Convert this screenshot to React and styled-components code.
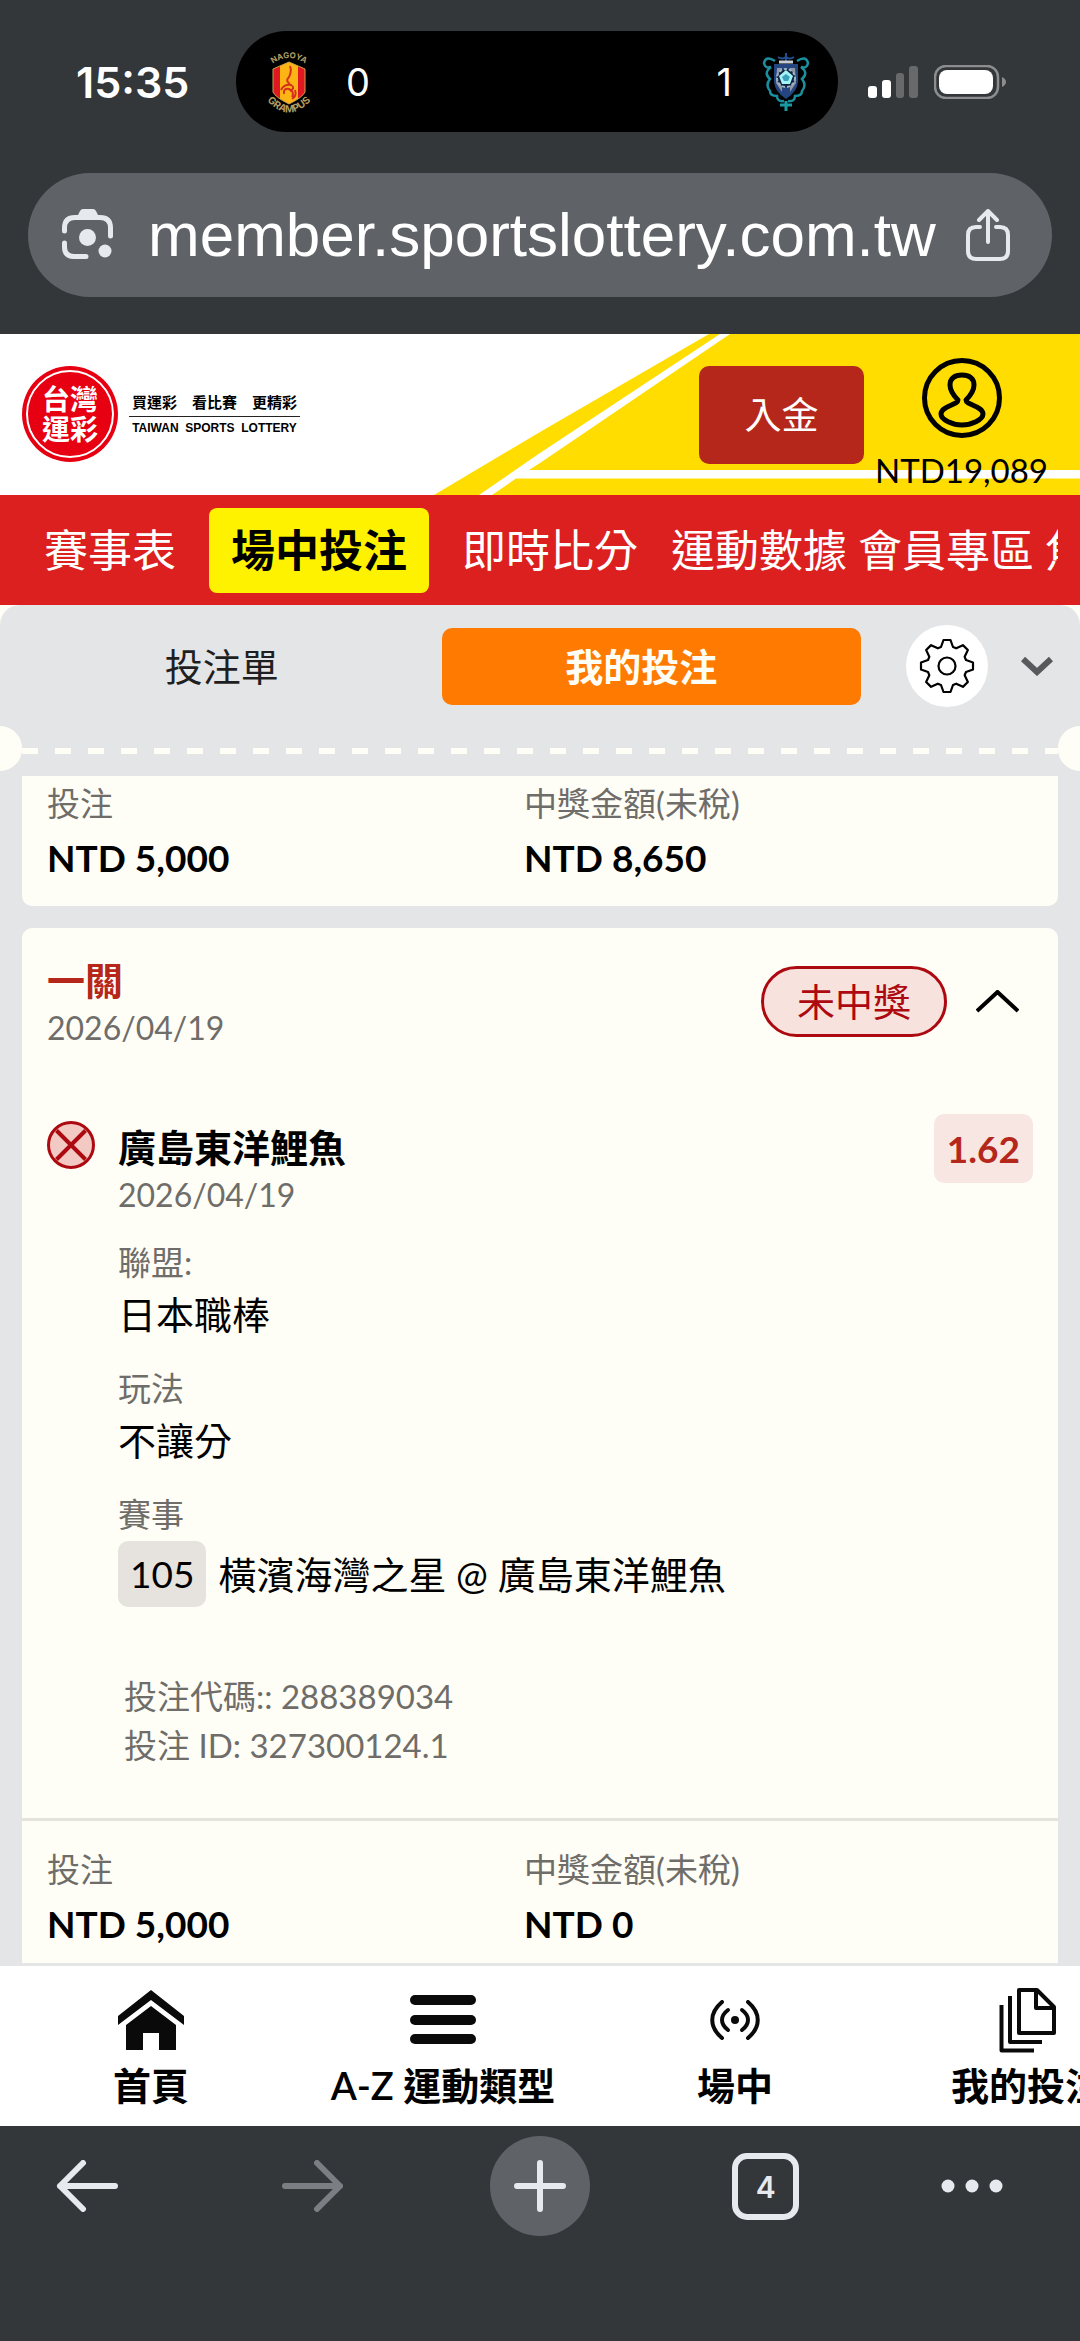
import React from 'react';
import styled, { createGlobalStyle } from 'styled-components';

const colors = {
  chrome: '#34373a',
  pill: '#5f6367',
  chromeIcon: '#e6e9ed',
  cream: '#fffef6',
  panel: '#e4e5e7',
  red: '#dc1f1f',
  darkRed: '#b5271b',
  lossRed: '#ad0910',
  yellow: '#ffdd00',
  orange: '#ff7a00',
  muted: '#6f6d69',
  line: '#e6e3df',
};

const siteFont = `Lato, "Noto Sans CJK TC", sans-serif`;
const systemFont = `Inter, "Noto Sans CJK TC", sans-serif`;

const GlobalStyle = createGlobalStyle`
  * {
    box-sizing: border-box;
  }

  body {
    margin: 0;
    background: ${colors.chrome};
    font-family: ${siteFont};
    color: #000;
  }

  button,
  input {
    border: 0;
    padding: 0;
    margin: 0;
    background: none;
    font: inherit;
    color: inherit;
  }

  a {
    color: inherit;
    text-decoration: none;
  }

  svg {
    display: block;
    flex-shrink: 0;
  }

  p, h2, h3, dl, dt, dd {
    margin: 0;
  }
`;

const Page = styled.div`
  display: flex;
  flex-direction: column;
  min-height: 100vh;
  overflow: hidden;
`;

/* Phone status bar + address bar */

const TopChrome = styled.div`
  padding: 31px 0 37px;
  background: ${colors.chrome};
  font-family: ${systemFont};
`;

const StatusBar = styled.div`
  display: flex;
  align-items: center;
  padding: 0 74px 0 76px;
  color: #fff;
`;

const Clock = styled.time`
  width: 160px;
  font-size: 43px;
  font-weight: 600;
  line-height: 50px;
`;

const Island = styled.div`
  flex: 1;
  display: flex;
  align-items: center;
  justify-content: space-between;
  height: 101px;
  margin-right: 30px;
  padding: 0 28px 0 26px;
  border-radius: 51px;
  background: #000;
`;

const Team = styled.div`
  display: flex;
  align-items: center;
  gap: 30px;
  font-size: 38px;
  line-height: 46px;
`;

const Signals = styled.div`
  display: flex;
  align-items: center;
  gap: 16px;
`;

const AddressBar = styled.div`
  display: flex;
  align-items: center;
  gap: 18px;
  height: 124px;
  margin: 41px 28px 0;
  padding: 0 42px 0 34px;
  border-radius: 62px;
  background: ${colors.pill};
  color: ${colors.chromeIcon};
`;

const AddressInput = styled.input`
  flex: 1;
  min-width: 0;
  padding-left: 16px;
  font-family: "Liberation Sans", sans-serif;
  font-size: 62px;
  line-height: 72px;
  color: #fff;
  outline: none;
`;

const PlainButton = styled.button`
  display: flex;
  align-items: center;
  justify-content: center;
`;

/* Site header */

const Header = styled.header`
  position: relative;
  display: flex;
  align-items: flex-start;
  height: 161px;
  padding: 24px 32px 0 22px;
  background: #fff;
`;

const HeaderArt = styled.svg`
  position: absolute;
  top: 0;
  right: 0;
`;

const Logo = styled.a`
  display: flex;
  align-items: center;
  gap: 11px;
  margin-top: 8px;
  margin-right: auto;
`;

const LogoMark = styled.span`
  display: flex;
  align-items: center;
  justify-content: center;
  width: 96px;
  height: 96px;
  padding: 4px;
  border-radius: 50%;
  background: #e60012;

  span {
    width: 88px;
    height: 88px;
    padding-top: 12px;
    border: 2px solid #fff;
    border-radius: 50%;
    color: #fff;
    font-size: 28px;
    font-weight: 700;
    line-height: 30px;
    text-align: center;
  }
`;

const Slogan = styled.span`
  display: flex;
  flex-direction: column;
  width: 171px;
  font-family: "Liberation Sans", "Noto Sans CJK TC", sans-serif;
  font-weight: 700;
  text-align: center;
  white-space: pre;

  span:first-child {
    border-bottom: 1px solid #222;
    font-size: 15px;
    line-height: 26px;
  }

  span:last-child {
    font-size: 12px;
    line-height: 22px;
  }
`;

const DepositButton = styled.button`
  position: relative;
  width: 165px;
  height: 98px;
  margin: 8px 11px 0 0;
  border-radius: 10px;
  background: ${colors.darkRed};
  color: #fff;
  font-size: 37px;
  line-height: 46px;
`;

const Account = styled.a`
  position: relative;
  display: flex;
  flex-direction: column;
  align-items: center;
  gap: 12px;
  font-size: 33px;
  line-height: 40px;
`;

const MainNav = styled.nav`
  height: 110px;
  padding: 13px 22px 0;
  background: ${colors.red};
`;

const NavTrack = styled.div`
  display: flex;
  align-items: center;
  gap: 11px;
  height: 85px;
  overflow: hidden;
`;

const NavLink = styled.a`
  flex-shrink: 0;
  padding: 0 ${props => (props.$tight ? 0 : 22)}px;
  border-radius: 8px;
  background: ${props => (props.$active ? '#fff200' : 'transparent')};
  color: ${props => (props.$active ? '#000' : '#fff')};
  font-size: 44px;
  font-weight: ${props => (props.$active ? 700 : 400)};
  line-height: 85px;
  white-space: nowrap;
`;

/* Bet slip panel */

const PanelWrap = styled.main`
  background: ${colors.cream};
`;

const Panel = styled.section`
  border-radius: 20px 20px 0 0;
  background: ${colors.panel};
`;

const PanelTabs = styled.div`
  display: flex;
  align-items: center;
  padding: 20px 27px 19px 22px;
`;

const Tab = styled.button`
  flex: 1;
  height: 77px;
  padding-right: 20px;
  border-radius: 10px;
  background: ${props => (props.$active ? colors.orange : 'transparent')};
  color: ${props => (props.$active ? colors.cream : '#1f1f22')};
  font-size: 38px;
  font-weight: ${props => (props.$active ? 700 : 400)};
  line-height: 44px;
`;

const SettingsButton = styled(PlainButton)`
  width: 82px;
  height: 82px;
  margin: 0 33px 0 45px;
  border-radius: 50%;
  background: #fff;
`;

const Perforation = styled.div`
  display: flex;
  align-items: center;
  height: 45px;
  margin-bottom: 5px;
`;

const Notch = styled.span`
  width: 22px;
  height: 45px;
  border-radius: ${props => (props.$right ? '22px 0 0 22px' : '0 22px 22px 0')};
  background: ${colors.cream};
`;

const Dashes = styled.span`
  flex: 1;
  height: 6px;
  margin-top: 4px;
  background: repeating-linear-gradient(
    to right,
    ${colors.cream} 0 16px,
    transparent 16px 33px
  );
`;

const BetList = styled.div`
  display: flex;
  flex-direction: column;
  gap: 22px;
  padding: 0 22px;
`;

const BetCard = styled.article`
  border-radius: ${props => (props.$cutTop ? '0 0 10px 10px' : '10px 10px 0 0')};
  background: ${colors.cream};
`;

const Amounts = styled.dl`
  display: grid;
  grid-template-columns: 15fr 16fr;
  padding: ${props => (props.$cutTop ? '6px 25px 25px' : '27px 25px 16px')};
  border-top: ${props => (props.$cutTop ? 0 : 3)}px solid ${colors.line};

  dt {
    margin-bottom: 11px;
    color: ${colors.muted};
    font-size: 33px;
    line-height: 42px;
  }

  dd {
    font-size: 37px;
    font-weight: 700;
    line-height: 46px;
  }
`;

const BetHeader = styled.div`
  display: flex;
  align-items: center;
  gap: 29px;
  padding: 27px 39px 0 25px;
`;

const BetTitle = styled.div`
  margin-right: auto;

  h2 {
    color: ${colors.darkRed};
    font-size: 38px;
    font-weight: 700;
    line-height: 50px;
  }
`;

const DateText = styled.p`
  margin-top: 3px;
  color: ${colors.muted};
  font-size: 32px;
  line-height: 40px;
`;

const ResultBadge = styled.span`
  padding: 0 33px;
  border: 3px solid ${colors.lossRed};
  border-radius: 36px;
  background: #f7e2dd;
  color: ${colors.lossRed};
  font-size: 38px;
  line-height: 65px;
`;

const Selection = styled.div`
  display: flex;
  align-items: flex-start;
  padding: 66px 25px 48px;

  > svg {
    margin: 7px 23px 0 0;
  }
`;

const SelectionBody = styled.div`
  flex: 1;
  padding-top: 8px;

  h3 {
    font-size: 38px;
    font-weight: 700;
    line-height: 50px;
  }
`;

const Odds = styled.span`
  padding: 0 13px;
  border-radius: 10px;
  background: #f7e6e1;
  color: ${colors.darkRed};
  font-size: 37px;
  font-weight: 700;
  line-height: 69px;
`;

const Details = styled.dl`
  display: flex;
  flex-direction: column;
  gap: 28px;
  margin-top: 26px;

  dt {
    margin-bottom: 6px;
    color: ${colors.muted};
    font-size: 33px;
    line-height: 42px;
  }

  dd {
    display: flex;
    align-items: center;
    gap: 12px;
    font-size: 38px;
    line-height: 50px;
  }
`;

const MatchNumber = styled.span`
  padding: 0 12px;
  border-radius: 10px;
  background: ${colors.line};
  font-size: 37px;
  line-height: 66px;
`;

const Codes = styled.div`
  margin-top: 65px;
  padding-left: 6px;
  color: ${colors.muted};
  font-size: 33px;
  line-height: 49px;
`;

/* Site bottom nav + browser toolbar */

const BottomNav = styled.nav`
  display: flex;
  height: 163px;
  padding: 18px 5px 0;
  border-top: 3px solid ${colors.panel};
  background: #fff;
  overflow: hidden;
`;

const BottomLink = styled.a`
  flex: 0 0 292px;
  display: flex;
  flex-direction: column;
  align-items: center;
  gap: 6px;
  font-size: 38px;
  font-weight: 600;
  line-height: 46px;
  white-space: nowrap;
`;

const IconSlot = styled.span`
  display: flex;
  align-items: center;
  height: 72px;
`;

const Toolbar = styled.nav`
  flex: 1;
  display: flex;
  align-items: flex-start;
  justify-content: space-between;
  min-height: 215px;
  padding: 10px 78px 0 37px;
  background: ${colors.chrome};
  color: ${colors.chromeIcon};
`;

const ToolButton = styled(PlainButton)`
  width: ${props => (props.$narrow ? 60 : 100)}px;
  height: 100px;
  border-radius: 50%;
  background: ${props => (props.$filled ? colors.pill : 'transparent')};
  opacity: ${props => (props.disabled ? 0.4 : 1)};
`;

const TabCount = styled.span`
  width: 67px;
  height: 67px;
  border: 6px solid ${colors.chromeIcon};
  border-radius: 15px;
  font-family: ${systemFont};
  font-size: 30px;
  font-weight: 600;
  line-height: 56px;
  text-align: center;
`;

const GrampusCrest = () => (
  <svg width="54" height="64" viewBox="0 0 54 64">
    <path id="arcTop" d="M9 15 Q27 1 45 15" fill="none" />
    <path id="arcBottom" d="M1 46 Q27 79 53 46" fill="none" />
    <path d="M11 19 L27 12 L43 19 V42 Q41 47 27 54 Q13 47 11 42 Z" fill="#e01822" />
    <path d="M18 16 L27 12 L36 16 V49 L27 54 L18 49 Z" fill="#fdb515" />
    <path d="M11 19 L27 12 L43 19 V42 Q41 47 27 54 Q13 47 11 42 Z" fill="none" stroke="#c9a24a" />
    <path d="M28 16 Q30 21 27 27 Q23 31 28 34 M19 40 Q22 34 29 35 Q34 38 28 41 M22 44 Q21 38 27 39 Q33 42 30 47 M33 40 Q35 46 30 49" fill="none" stroke="#d5301c" strokeWidth="2" />
    <text fill="#b39d62" fontSize="8" fontWeight="700">
      <textPath href="#arcTop" startOffset="50%" textAnchor="middle">NAGOYA</textPath>
    </text>
    <text fill="#b39d62" fontSize="10" fontWeight="700">
      <textPath href="#arcBottom" startOffset="50%" textAnchor="middle">GRAMPUS</textPath>
    </text>
  </svg>
);

const AvispaCrest = () => (
  <svg width="48" height="60" viewBox="0 0 48 60" fill="none">
    <path d="M24 1 V9 M16 5 Q20 8 24 5 Q28 8 32 5" stroke="#234f91" strokeWidth="2" />
    <path d="M13 9 Q4 3 2 11 Q3 17 9 15 Q1 21 8 27 Q3 33 8 39 Q8 44 15 44 Q15 50 22 49 M35 9 Q44 3 46 11 Q45 17 39 15 Q47 21 40 27 Q45 33 40 39 Q40 44 33 44 Q33 50 26 49" stroke="#1c8f9e" strokeWidth="2.5" />
    <path d="M18 53 H30 M24 49 V59" stroke="#1c9aa3" strokeWidth="3" />
    <path d="M12 12 H36 V30 Q35 40 24 47 Q13 40 12 30 Z" fill="#24457f" />
    <path d="M15 16 H20 V40 L14 31 Z M33 16 H28 V40 L34 31 Z" fill="#8f98a6" />
    <path d="M17 10 H31" stroke="#c5ccd4" strokeWidth="3" />
    <circle cx="24" cy="26" r="9" fill="#0f2140" stroke="#9fb5c4" strokeWidth="2" strokeDasharray="3 2" />
    <path d="M24 18 L31 24 L28 32 H20 L17 24 Z" fill="#a4f3f5" />
    <path d="M24 22 L28 25 L26 29 H22 L20 25 Z" fill="#3ba2bd" />
  </svg>
);

const CellSignal = () => (
  <svg width="50" height="32" viewBox="0 0 50 32" fill="#fff">
    <rect x="0" y="20" width="9" height="12" rx="3" />
    <rect x="14" y="14" width="9" height="18" rx="3" />
    <rect x="28" y="7" width="8" height="25" rx="3" opacity="0.25" />
    <rect x="41" y="0" width="9" height="32" rx="3" opacity="0.25" />
  </svg>
);

const Battery = () => (
  <svg width="72" height="34" viewBox="0 0 72 34">
    <rect x="1" y="1" width="63" height="32" rx="11" fill="none" stroke="#8b8d8f" strokeWidth="2.5" />
    <rect x="5" y="5" width="54" height="24" rx="8" fill="#fff" />
    <path d="M68 12 Q72 14 72 17 Q72 20 68 22 Z" fill="#8b8d8f" />
  </svg>
);

const LensIcon = () => (
  <svg width="52" height="52" viewBox="0 0 52 52" fill="currentColor">
    <path d="M2.5 22 V19 Q2.5 8.5 13 8.5 H38 Q48.5 8.5 48.5 19 V27 M2.5 34 V38 Q2.5 47.5 12 47.5 H24" fill="none" stroke="currentColor" strokeWidth="5" strokeLinecap="round" />
    <path d="M15 8 L18 2 Q19 0 21 0 H31 Q33 0 34 2 L37 8 Z" />
    <circle cx="25.5" cy="28.5" r="8.5" />
    <circle cx="43" cy="42" r="6.5" />
  </svg>
);

const ShareIcon = () => (
  <svg width="44" height="52" viewBox="0 0 44 52" fill="none" stroke="currentColor" strokeWidth="4" strokeLinecap="round" strokeLinejoin="round">
    <path d="M14 18 H10 Q2 18 2 26 V42 Q2 50 10 50 H34 Q42 50 42 42 V26 Q42 18 34 18 H30" />
    <path d="M22 33 V3 M13 11 L22 2 L31 11" />
  </svg>
);

const UserIcon = () => (
  <svg width="80" height="80" viewBox="0 0 80 80" fill="none" stroke="#000" strokeWidth="5">
    <circle cx="40" cy="40" r="37.5" />
    <path d="M36 42 C31 37 28 32 28 27 C28 20 33 17 40 17 C47 17 52 20 52 27 C52 32 49 37 44 42 C44 47 61 48 61 56 C61 62 49 67 40 67 C31 67 19 62 19 56 C19 48 36 47 36 42 Z" strokeLinejoin="round" />
  </svg>
);

// one tooth per 45 degrees, points go clockwise round the centre
const gearPoints = Array.from({ length: 8 }, (_, i) => {
  const a = (i * Math.PI) / 4;
  return [[-6, -19], [-3.5, -26], [3.5, -26], [6, -19]]
    .map(([x, y]) => `${(x * Math.cos(a) - y * Math.sin(a)).toFixed(2)},${(x * Math.sin(a) + y * Math.cos(a)).toFixed(2)}`)
    .join(' ');
}).join(' ');

const GearIcon = () => (
  <svg width="56" height="56" viewBox="-28 -28 56 56" fill="none" stroke="#000" strokeWidth="2.2" strokeLinejoin="round">
    <polygon points={gearPoints} />
    <circle r="8.5" />
  </svg>
);

const ChevronDown = () => (
  <svg width="32" height="20" viewBox="0 0 32 20" fill="none" stroke="#58595c" strokeWidth="6">
    <path d="M2 3 L16 16 L30 3" />
  </svg>
);

const ChevronUp = () => (
  <svg width="43" height="24" viewBox="0 0 43 24" fill="none" stroke="#000" strokeWidth="4">
    <path d="M1 21 L21.5 2 L42 21" />
  </svg>
);

const LossIcon = () => (
  <svg width="48" height="48" viewBox="0 0 48 48" stroke={colors.lossRed}>
    <circle cx="24" cy="24" r="22.5" fill="#f3c9c4" strokeWidth="3" />
    <path d="M9.5 9.5 L38.5 38.5 M38.5 9.5 L9.5 38.5" strokeWidth="4" />
  </svg>
);

const HomeIcon = () => (
  <svg width="66" height="60" viewBox="0 0 66 60" fill="#0a0a0a">
    <path d="M33 0 L66 26 V35 L33 10 L0 35 V26 Z" />
    <path d="M33 16 L58 35 V60 H41 V43 H25 V60 H8 V35 Z" />
  </svg>
);

const MenuIcon = () => (
  <svg width="66" height="50" viewBox="0 0 66 50" fill="#0a0a0a">
    <rect width="66" height="10" rx="5" />
    <rect y="20" width="66" height="10" rx="5" />
    <rect y="39" width="66" height="10" rx="5" />
  </svg>
);

const LiveIcon = () => (
  <svg width="50" height="40" viewBox="0 0 50 40" fill="none" stroke="#0a0a0a" strokeWidth="4" strokeLinecap="round">
    <path d="M12 2 C-1 13 -1 27 12 38 M38 2 C51 13 51 27 38 38" />
    <path d="M18 10 C10 16 10 24 18 30 M32 10 C40 16 40 24 32 30" />
    <circle cx="25" cy="20" r="4" fill="#0a0a0a" stroke="none" />
  </svg>
);

const CopiesIcon = () => (
  <svg width="57" height="66" viewBox="0 0 57 66" fill="none" stroke="#0a0a0a" strokeWidth="4" strokeLinejoin="round">
    <path d="M20 3 H38 L55 20 V46 H20 Z" />
    <path d="M37 3 V21 H55" />
    <path d="M11 9 V55 H43 M2.5 18 V63.5 H35" />
  </svg>
);

const ArrowIcon = ({ forward }) => (
  <svg width="62" height="52" viewBox="0 0 62 52" fill="none" stroke="currentColor" strokeWidth="6" strokeLinecap="round" strokeLinejoin="round">
    <path d={forward ? 'M3 26 H58 M35 3 L58 26 L35 49' : 'M59 26 H4 M27 3 L4 26 L27 49'} />
  </svg>
);

const PlusIcon = () => (
  <svg width="52" height="52" viewBox="0 0 52 52" stroke="currentColor" strokeWidth="6" strokeLinecap="round">
    <path d="M26 3 V49 M3 26 H49" />
  </svg>
);

const MoreIcon = () => (
  <svg width="62" height="14" viewBox="0 0 62 14" fill="currentColor">
    <circle cx="7" cy="7" r="6.5" />
    <circle cx="31" cy="7" r="6.5" />
    <circle cx="55" cy="7" r="6.5" />
  </svg>
);

const navItems = [
  { label: '賽事表' },
  { label: '場中投注', active: true },
  { label: '即時比分' },
  { label: '運動數據', tight: true },
  { label: '會員專區', tight: true },
  { label: '焦', tight: true },
];

const bottomItems = [
  { label: '首頁', icon: <HomeIcon /> },
  { label: 'A-Z 運動類型', icon: <MenuIcon /> },
  { label: '場中', icon: <LiveIcon /> },
  { label: '我的投注', icon: <CopiesIcon /> },
];

const BetAmounts = ({ stake, payout, cutTop }) => (
  <Amounts $cutTop={cutTop}>
    <div>
      <dt>投注</dt>
      <dd>{stake}</dd>
    </div>
    <div>
      <dt>中獎金額(未稅)</dt>
      <dd>{payout}</dd>
    </div>
  </Amounts>
);

const App = () => {
  return (
    <Page lang="zh-Hant">
      <GlobalStyle />

      <TopChrome>
        <StatusBar>
          <Clock>15:35</Clock>
          <Island>
            <Team>
              <GrampusCrest />
              <span>0</span>
            </Team>
            <Team>
              <span>1</span>
              <AvispaCrest />
            </Team>
          </Island>
          <Signals>
            <CellSignal />
            <Battery />
          </Signals>
        </StatusBar>
        <AddressBar>
          <PlainButton aria-label="Lens">
            <LensIcon />
          </PlainButton>
          <AddressInput aria-label="URL" defaultValue="member.sportslottery.com.tw" />
          <PlainButton aria-label="Share">
            <ShareIcon />
          </PlainButton>
        </AddressBar>
      </TopChrome>

      <Header>
        <HeaderArt width="646" height="161" viewBox="0 0 646 161">
          <path d="M0 161 L106 98 L275 0 H646 V161 Z" fill={colors.yellow} />
          <path d="M45 161 L106 119 L286 0 H296 L106 129 L95 136 H646 V144.5 H82 L58 161 Z" fill="#fff" />
        </HeaderArt>
        <Logo href="#">
          <LogoMark>
            <span>台灣<br />運彩</span>
          </LogoMark>
          <Slogan>
            <span>買運彩　看比賽　更精彩</span>
            <span>TAIWAN  SPORTS  LOTTERY</span>
          </Slogan>
        </Logo>
        <DepositButton>入金</DepositButton>
        <Account href="#">
          <UserIcon />
          <span>NTD19,089</span>
        </Account>
      </Header>

      <MainNav>
        <NavTrack>
          {navItems.map(item => (
            <NavLink key={item.label} href="#" $active={item.active} $tight={item.tight}>
              {item.label}
            </NavLink>
          ))}
        </NavTrack>
      </MainNav>

      <PanelWrap>
        <Panel>
          <PanelTabs>
            <Tab>投注單</Tab>
            <Tab $active>我的投注</Tab>
            <SettingsButton aria-label="設定">
              <GearIcon />
            </SettingsButton>
            <PlainButton aria-label="收合">
              <ChevronDown />
            </PlainButton>
          </PanelTabs>
          <Perforation>
            <Notch />
            <Dashes />
            <Notch $right />
          </Perforation>

          <BetList>
            <BetCard $cutTop>
              <BetAmounts stake="NTD 5,000" payout="NTD 8,650" cutTop />
            </BetCard>

            <BetCard>
              <BetHeader>
                <BetTitle>
                  <h2>一關</h2>
                  <DateText>2026/04/19</DateText>
                </BetTitle>
                <ResultBadge>未中獎</ResultBadge>
                <PlainButton aria-label="收合">
                  <ChevronUp />
                </PlainButton>
              </BetHeader>

              <Selection>
                <LossIcon />
                <SelectionBody>
                  <h3>廣島東洋鯉魚</h3>
                  <DateText>2026/04/19</DateText>
                  <Details>
                    <div>
                      <dt>聯盟:</dt>
                      <dd>日本職棒</dd>
                    </div>
                    <div>
                      <dt>玩法</dt>
                      <dd>不讓分</dd>
                    </div>
                    <div>
                      <dt>賽事</dt>
                      <dd>
                        <MatchNumber>105</MatchNumber>
                        <span>橫濱海灣之星 @ 廣島東洋鯉魚</span>
                      </dd>
                    </div>
                  </Details>
                  <Codes>
                    <p>投注代碼:: 288389034</p>
                    <p>投注 ID: 327300124.1</p>
                  </Codes>
                </SelectionBody>
                <Odds>1.62</Odds>
              </Selection>

              <BetAmounts stake="NTD 5,000" payout="NTD 0" />
            </BetCard>
          </BetList>
        </Panel>
      </PanelWrap>

      <BottomNav>
        {bottomItems.map(item => (
          <BottomLink key={item.label} href="#">
            <IconSlot>{item.icon}</IconSlot>
            <span>{item.label}</span>
          </BottomLink>
        ))}
      </BottomNav>

      <Toolbar>
        <ToolButton aria-label="Back">
          <ArrowIcon />
        </ToolButton>
        <ToolButton aria-label="Forward" disabled>
          <ArrowIcon forward />
        </ToolButton>
        <ToolButton aria-label="New tab" $filled>
          <PlusIcon />
        </ToolButton>
        <ToolButton aria-label="Tabs">
          <TabCount>4</TabCount>
        </ToolButton>
        <ToolButton aria-label="More" $narrow>
          <MoreIcon />
        </ToolButton>
      </Toolbar>
    </Page>
  );
};

export default App;
